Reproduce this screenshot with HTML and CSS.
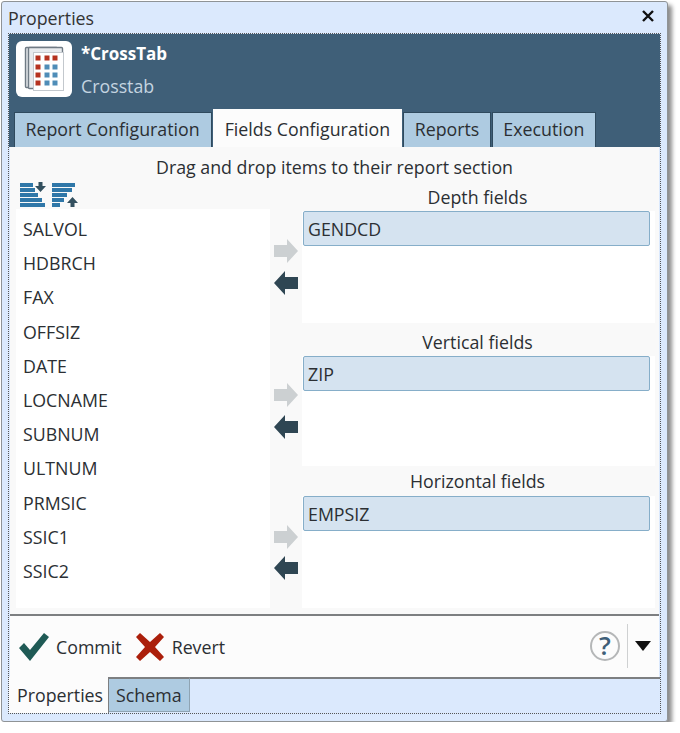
FILE: index.html
```html
<!DOCTYPE html>
<html>
<head>
    <title>Properties</title>
    <link rel="stylesheet" href="styles.css">
</head>
<body>
    <div class="window">
        <div class="title-bar">
            <span>Properties</span>
            <svg class="close-icon" width="14" height="14" viewBox="0 0 14 14">
                <path d="M2 2 L12 12 M12 2 L2 12" stroke="#111" stroke-width="2.4" fill="none"/>
            </svg>
        </div>

        <div class="dock">
            <div class="header">
                <div class="header-top">
                    <div class="logo">
                        <svg width="56" height="56" viewBox="0 0 56 56">
                            <rect x="9.5" y="6.5" width="32" height="40" rx="1" fill="#dfe3e6" stroke="#6f7a84" stroke-width="1.4"/>
                            <rect x="12.5" y="6.5" width="34" height="41" rx="1" fill="#e8ebee" stroke="#6f7a84" stroke-width="1.4"/>
                            <rect x="17.5" y="11.5" width="30" height="38" fill="#fff" stroke="#c3c8cd"/>
                            <g fill="#b5321f">
                                <rect x="19.5" y="14.5" width="5" height="5"/>
                                <rect x="28.5" y="14.5" width="5" height="5"/>
                                <rect x="36.5" y="14.5" width="5" height="5"/>
                                <rect x="19.5" y="23.5" width="5" height="5"/>
                                <rect x="19.5" y="31.5" width="5" height="5"/>
                                <rect x="19.5" y="39.5" width="5" height="5"/>
                            </g>
                            <g fill="#4f8db8">
                                <rect x="28.5" y="23.5" width="5" height="5"/>
                                <rect x="36.5" y="23.5" width="5" height="5"/>
                                <rect x="28.5" y="31.5" width="5" height="5"/>
                                <rect x="36.5" y="31.5" width="5" height="5"/>
                                <rect x="28.5" y="39.5" width="5" height="5"/>
                                <rect x="36.5" y="39.5" width="5" height="5"/>
                            </g>
                        </svg>
                    </div>
                    <div class="header-text">
                        <div class="node-name">*CrossTab</div>
                        <div class="node-type">Crosstab</div>
                    </div>
                </div>
                <div class="tabs">
                    <div class="tab">Report Configuration</div>
                    <div class="tab active">Fields Configuration</div>
                    <div class="tab">Reports</div>
                    <div class="tab">Execution</div>
                </div>
            </div>

            <div class="content">
                <div class="hint">Drag and drop items to their report section</div>
                <div class="columns">
                    <div class="source">
                        <div class="sort-icons">
                            <svg width="28" height="26" viewBox="0 0 28 26">
                                <g fill="#2f77a8">
                                    <rect x="0" y="1" width="13" height="4"/>
                                    <rect x="0" y="6" width="15" height="4"/>
                                    <rect x="0" y="11" width="18" height="4"/>
                                    <rect x="0" y="16" width="22" height="4"/>
                                    <rect x="0" y="21" width="25" height="4"/>
                                </g>
                                <path d="M18.5 0 h4 v4 h3.5 l-5.5 6 l-5.5 -6 h3.5 z" fill="#33505f"/>
                            </svg>
                            <svg width="28" height="26" viewBox="0 0 28 26">
                                <g fill="#2f77a8">
                                    <rect x="0" y="1" width="23" height="4"/>
                                    <rect x="0" y="6" width="20" height="4"/>
                                    <rect x="0" y="11" width="15" height="4"/>
                                    <rect x="0" y="16" width="12" height="4"/>
                                    <rect x="0" y="21" width="8" height="4"/>
                                </g>
                                <path d="M20.5 15 l5.5 6 h-3.5 v4 h-4 v-4 h-3.5 z" fill="#33505f"/>
                            </svg>
                        </div>
                        <ul class="field-list">
                            <li>SALVOL</li>
                            <li>HDBRCH</li>
                            <li>FAX</li>
                            <li>OFFSIZ</li>
                            <li>DATE</li>
                            <li>LOCNAME</li>
                            <li>SUBNUM</li>
                            <li>ULTNUM</li>
                            <li>PRMSIC</li>
                            <li>SSIC1</li>
                            <li>SSIC2</li>
                        </ul>
                    </div>

                    <div class="targets">
                        <div class="target target-depth">
                            <div class="arrows">
                                <svg width="26" height="24" viewBox="0 0 26 24"><path d="M1 6 h13 v-6 l11 12 l-11 12 v-6 h-13 z" fill="#ccd0d2"/></svg>
                                <svg width="26" height="24" viewBox="0 0 26 24"><path d="M25 6 h-13 v-6 l-11 12 l11 12 v-6 h13 z" fill="#2f4653"/></svg>
                            </div>
                            <div class="panel">
                                <div class="panel-title">Depth fields</div>
                                <div class="drop-area"><div class="chip">GENDCD</div></div>
                            </div>
                        </div>
                        <div class="target target-vertical">
                            <div class="arrows">
                                <svg width="26" height="24" viewBox="0 0 26 24"><path d="M1 6 h13 v-6 l11 12 l-11 12 v-6 h-13 z" fill="#ccd0d2"/></svg>
                                <svg width="26" height="24" viewBox="0 0 26 24"><path d="M25 6 h-13 v-6 l-11 12 l11 12 v-6 h13 z" fill="#2f4653"/></svg>
                            </div>
                            <div class="panel">
                                <div class="panel-title">Vertical fields</div>
                                <div class="drop-area"><div class="chip">ZIP</div></div>
                            </div>
                        </div>
                        <div class="target target-horizontal">
                            <div class="arrows">
                                <svg width="26" height="24" viewBox="0 0 26 24"><path d="M1 6 h13 v-6 l11 12 l-11 12 v-6 h-13 z" fill="#ccd0d2"/></svg>
                                <svg width="26" height="24" viewBox="0 0 26 24"><path d="M25 6 h-13 v-6 l-11 12 l11 12 v-6 h13 z" fill="#2f4653"/></svg>
                            </div>
                            <div class="panel">
                                <div class="panel-title">Horizontal fields</div>
                                <div class="drop-area"><div class="chip">EMPSIZ</div></div>
                            </div>
                        </div>
                    </div>
                </div>
            </div>

            <div class="actions">
                <div class="action">
                    <svg width="31" height="30" viewBox="0 0 31 30"><path d="M1 16 L6 11 L12 18 L26 1 L31 5 L12 29 z" fill="#1f5a55"/></svg>
                    <span>Commit</span>
                </div>
                <div class="action">
                    <svg width="30" height="30" viewBox="0 0 30 30"><path d="M5 1 L15 10 L25 1 L29 5 L20 15 L29 25 L25 29 L15 20 L5 29 L1 25 L10 15 L1 5 z" fill="#ab1f0b"/></svg>
                    <span>Revert</span>
                </div>
                <div class="action-end">
                    <div class="help">?</div>
                    <div class="divider"></div>
                    <svg width="16" height="10" viewBox="0 0 16 10"><path d="M0 0 H16 L8 10 z" fill="#111"/></svg>
                </div>
            </div>

            <div class="bottom-tabs">
                <div class="bottom-tab active">Properties</div>
                <div class="bottom-tab">Schema</div>
                <div class="bottom-rest"></div>
            </div>
        </div>
    </div>
</body>
</html>
```

FILE: styles.css
```css
body {
    margin: 0;
    padding: 0;
    background-color: #fff;
    font-family: "Open Sans", "Noto Sans", sans-serif;
    font-size: 17.8px;
    color: #2b2f33;
}

.window {
    box-sizing: border-box;
    width: 667px;
    height: 721px;
    margin: 1px 0 0 1px;
    padding: 0 6px 7px 6px;
    display: flex;
    flex-direction: column;
    background-color: #dbe9fd;
    border: 1px solid #8f9396;
    border-radius: 3px;
    box-shadow: 4px 4px 4px #8c8c8c;
}

.title-bar {
    height: 31px;
    flex: none;
    display: flex;
    align-items: center;
    justify-content: space-between;
    padding: 0 6px 0 0;
    color: #333;
}

.close-icon {
    margin-bottom: 3px;
}

.dock {
    flex: 1;
    display: flex;
    flex-direction: column;
    border: 1px dotted #555;
    min-height: 0;
}

.header {
    background-color: #3f5f78;
    flex: none;
    height: 113px;
    display: flex;
    flex-direction: column;
    justify-content: space-between;
}

.header-top {
    display: flex;
    padding: 7px 0 0 7px;
    gap: 9px;
}

.logo {
    width: 56px;
    height: 56px;
    background-color: #fff;
    border-radius: 6px;
}

.node-name {
    color: #fff;
    font-size: 17px;
    font-weight: 700;
    line-height: 26px;
}

.node-type {
    color: #c4d4e0;
    line-height: 38px;
}

.tabs {
    display: flex;
    align-items: flex-end;
    gap: 1px;
    padding-left: 5px;
}

.tab {
    height: 34px;
    line-height: 32px;
    padding: 0 10.5px;
    background-color: #aecbe1;
    border: 1px solid #2f4a5e;
    border-bottom: none;
}

.tab:first-child {
    padding: 0 11px 0 10.5px;
}

.tab.active {
    height: 37px;
    line-height: 38px;
    padding: 0 11px;
    background-color: #fcfcfc;
    border-color: #fcfcfc;
}

.content {
    flex: 1;
    min-height: 0;
    display: flex;
    flex-direction: column;
    background-color: #f9f9f9;
    margin: 0 1px;
    padding: 0 4px 6px 6px;
    border-bottom: 2px solid #7d7f81;
}

.hint {
    text-align: center;
    line-height: 40px;
    height: 32px;
    padding-right: 2px;
}

.columns {
    flex: 1;
    display: flex;
    min-height: 0;
}

.source {
    width: 254px;
    flex: none;
    display: flex;
    flex-direction: column;
}

.sort-icons {
    height: 30px;
    box-sizing: border-box;
    padding: 0 0 1px 4px;
    display: flex;
    align-items: flex-end;
    gap: 4px;
}

.field-list {
    list-style: none;
    margin: 0;
    padding: 3px 0 0 7px;
    flex: 1;
    background-color: #fff;
}

.field-list li {
    height: 34.2px;
    line-height: 34px;
}

.targets {
    flex: 1;
    display: flex;
    flex-direction: column;
}

.target {
    display: flex;
}

.target-depth {
    height: 144px;
}

.target-vertical {
    height: 143px;
}

.target-horizontal {
    flex: 1;
}

.arrows {
    width: 32px;
    flex: none;
    display: flex;
    flex-direction: column;
    align-items: center;
    gap: 8px;
    padding-top: 60px;
}

.target-horizontal .arrows {
    gap: 7px;
    padding-top: 59px;
}

.panel {
    flex: 1;
    display: flex;
    flex-direction: column;
}

.panel-title {
    flex: none;
    display: flex;
    align-items: flex-end;
    justify-content: center;
    height: 32px;
    line-height: 28px;
    padding-right: 2px;
}

.target-vertical .panel-title {
    height: 33px;
}

.target-horizontal .panel-title {
    height: 30px;
    line-height: 30px;
}

.drop-area {
    flex: 1;
    background-color: #fff;
}

.chip {
    box-sizing: border-box;
    height: 35px;
    line-height: 34px;
    margin: 0 5px 0 1px;
    padding-left: 4px;
    background-color: #d5e3f0;
    border: 1px solid #86aec9;
    border-radius: 2px;
}

.actions {
    flex: none;
    height: 61px;
    display: flex;
    align-items: center;
    gap: 13px;
    padding: 0 8px;
    background-color: #fcfcfc;
    margin: 0 1px;
}

.action {
    display: flex;
    align-items: center;
    gap: 7px;
}

.action-end {
    margin-left: auto;
    padding-bottom: 1px;
    display: flex;
    align-items: center;
    gap: 7px;
}

.help {
    box-sizing: border-box;
    width: 30px;
    height: 30px;
    border: 2px solid #b5b7b8;
    border-radius: 50%;
    text-align: center;
    line-height: 25px;
    font-weight: 600;
    font-size: 26px;
    color: #3f5f78;
}

.divider {
    width: 1px;
    height: 44px;
    background-color: #cfd1d2;
}

.bottom-tabs {
    flex: none;
    height: 36px;
    display: flex;
    align-items: flex-start;
}

.bottom-tab {
    box-sizing: border-box;
    height: 35px;
    padding: 0 7px 0 7px;
    line-height: 33px;
    background-color: #aecbe1;
    border-top: 2px solid #7d7f81;
    border-right: 1px solid #8fa4b3;
    border-bottom: 1px solid #8fa4b3;
}

.bottom-tab.active {
    height: 36px;
    padding: 2px 5px 0 8px;
    background-color: #fcfcfc;
    border-top: none;
    border-right: 1px solid #7d7f81;
    border-bottom: none;
}

.bottom-rest {
    flex: 1;
    border-top: 2px solid #7d7f81;
}
```
